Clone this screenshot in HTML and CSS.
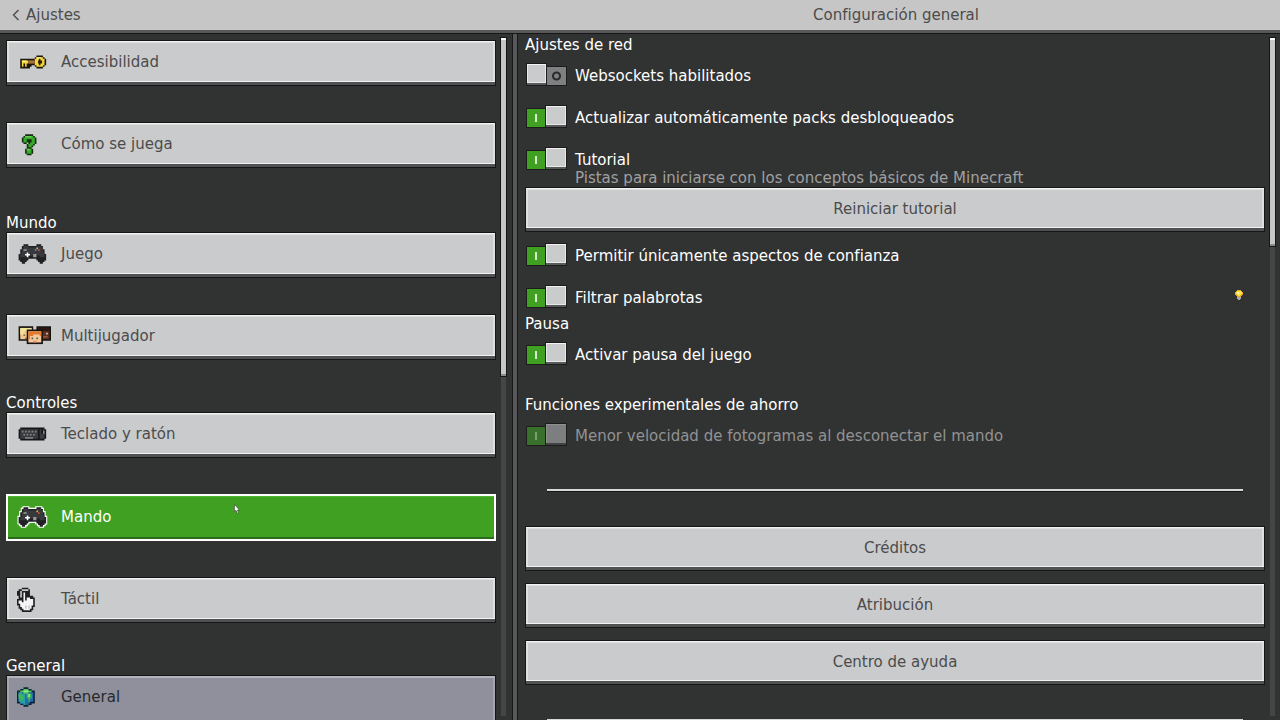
FILE: index.html
```
<!DOCTYPE html>
<html lang="es">
<head>
  <meta charset="UTF-8" />
  <meta name="viewport" content="width=device-width, initial-scale=1" />
  <title>Ajustes</title>
  <link rel="stylesheet" href="styles.css">
</head>
<body>

<header>
  <a class="back" href="#">
    <svg width="8" height="12" viewBox="0 0 8 12"><path d="M6.500 1L1.500 6l5 5" fill="none" stroke="#4c4c4c" stroke-width="1.4"/></svg>
    Ajustes
  </a>
  <h1>Configuración general</h1>
</header>

<main>
  <div class="sidebar">
    <nav>
      <button class="item">
        <svg class="icon" viewBox="0 0 21 16">
          <path fill="#1c1508" d="M12 4h4v1h1v1h1v4h-1v1h-1v1h-4v-1h-1v-1H9v1H8v1H2V6h9V5h1z"/>
          <path fill="#f3d63b" d="M12 5h4v1h1v4h-1v1h-4v-1h-1V6h1zM3 7h4v2H6v2H5V9H4v2H3z"/>
          <path fill="#a9743b" d="M7 7h4v2H7z"/>
          <path fill="#fff27a" d="M12 5h3v1h-3zM3 7h3v1H3z"/>
          <path fill="#2c2108" d="M13 7h.500V6h1v1h1v2h-1v1h-1V9H13z"/>
        </svg>
        Accesibilidad
      </button>
      <button class="item">
        <svg class="icon" viewBox="0 0 21 16">
          <path fill="#12300e" d="M5 2h5v1h1v1h1v4h-1v1h-1v1H9v1h1v3H9v1H6v-1H5v-3h1V8h1V7H6v1H4V7H3V4h1V3h1z"/>
          <path fill="#36a82c" d="M5 3h5v1h1v4h-1v1H9v1H7V8h1V7h1V5H6v2H4V4h1zM6 11h3v3H6z"/>
          <path fill="#62cc50" d="M5 3h4v1H5zM6 11h2v1H6z"/>
        </svg>
        Cómo se juega
      </button>

      <h2>Mundo</h2>
      <button class="item">
        <svg class="icon" viewBox="0 0 21 16">
          <path fill="#202123" d="M4 2h3v1h5V2h3v1h1v2h1v3h1v4h-1v1h-1v1h-2v-1h-1v-1h-1v-1H7v1H6v1H5v1H3v-1H2v-1H1V8h1V5h1V3h1z"/>
          <path fill="#38393c" d="M4 3h3v1h5V3h3v1h1v3h1v3h-3v-1H5v1H2V8h1V5h1z"/>
          <path fill="#fff" d="M6 7h1v1h1v1H7v1H6V9H5V8h1z"/>
          <path fill="#9a9a9a" d="M4 5h2v1H4zM10 8h2v2h-2z"/>
          <path fill="#d9533a" d="M13 5h1v1h-1z"/><path fill="#4b8fd0" d="M11 5h1v1h-1z"/><path fill="#e2b13b" d="M12 4h1v1h-1z"/>
        </svg>
        Juego
      </button>
      <button class="item">
        <svg class="icon" viewBox="0 0 21 16">
          <path fill="#17130f" d="M1 2h9v9H1zM12 2h9v9h-9z"/>
          <path fill="#edc98f" d="M2 3h7v7H2z"/><path fill="#f3e49a" d="M2 3h7v2H4v2H2z"/>
          <path fill="#9a6238" d="M4 7h1v1H4zM5 9h1v1H5z"/>
          <path fill="#5b3021" d="M13 3h7v7h-7z"/><path fill="#2b1710" d="M13 3h7v2h-7z"/>
          <path fill="#e4d3c8" d="M18 6h1v1h-1z"/><path fill="#97543c" d="M16 8h3v1h-3z"/>
          <path fill="#17130f" d="M6 4h10v9H6z"/>
          <path fill="#f4c79d" d="M7 5h8v7H7z"/><path fill="#e07a32" d="M7 5h8v3h-1V7h-4v1H8v2H7z"/>
          <path fill="#47684a" d="M9 9h1v1H9zM12 9h1v1h-1z"/><path fill="#dc8b78" d="M10 11h2v1h-2z"/>
        </svg>
        Multijugador
      </button>

      <h2>Controles</h2>
      <button class="item">
        <svg class="icon" viewBox="0 0 21 16">
          <path fill="#151618" d="M2 4h15v1h1v6h-1v1H2v-1H1V5h1z"/>
          <path fill="#3b3c40" d="M2 5h11v6H2zM14 5h3v6h-3z"/>
          <path fill="#85868a" d="M3 6h1v1H3zM5 6h1v1H5zM7 6h1v1H7zM9 6h1v1H9zM11 6h1v1h-1zM4 8h1v1H4zM6 8h1v1H6zM8 8h1v1H8zM10 8h1v1h-1zM5 10h5v1H5zM16 6h1v2h-1z"/>
          <path fill="#151618" d="M15 5h1v3h-1z"/>
        </svg>
        Teclado y ratón
      </button>
      <button class="item hovered">
        <svg class="icon" viewBox="0 0 21 16">
          <path fill="#202123" stroke="#fff" stroke-width="1.4" paint-order="stroke" d="M4 2h3v1h5V2h3v1h1v2h1v3h1v4h-1v1h-1v1h-2v-1h-1v-1h-1v-1H7v1H6v1H5v1H3v-1H2v-1H1V8h1V5h1V3h1z"/>
          <path fill="#38393c" d="M4 3h3v1h5V3h3v1h1v3h1v3h-3v-1H5v1H2V8h1V5h1z"/>
          <path fill="#fff" d="M6 7h1v1h1v1H7v1H6V9H5V8h1z"/>
          <path fill="#9a9a9a" d="M4 5h2v1H4zM10 8h2v2h-2z"/>
          <path fill="#d9533a" d="M13 5h1v1h-1z"/><path fill="#e2b13b" d="M12 4h1v1h-1z"/>
        </svg>
        Mando
        <svg class="cursor" width="6" height="10" viewBox="0 0 6 10"><path d="M.5 .5v7l1.5-1.200 1.200 3 1.200-.5-1-2.800h2z" fill="#fff" stroke="#333" stroke-width=".5"/></svg>
      </button>
      <button class="item">
        <svg class="icon" viewBox="0 0 21 16">
          <path fill="#202022" d="M3 1h4v1h1v4h2v1h1v6h-1v2H9v1H3v-1H2v-1H1v-2H0V8h1V6H0V3h1V2h2z"/>
          <path fill="#f4f4f6" d="M4 4h1v5h1V7h2v1h2v4H9v2H8v1H4v-1H3v-1H2v-2H1V9h2v1h1z"/>
          <path fill="#c9cacc" d="M2 3h1V2h4v1H3v4H2zM5 12h1v2H5zM7 12h1v2H7z"/>
        </svg>
        Táctil
      </button>

      <h2>General</h2>
      <button class="item selected">
        <svg class="icon" viewBox="0 0 21 16">
          <path fill="#0d2636" d="M4 2h3v1h2v1h2v8H9v1H7v1H4v-1H2v-1H0V4h2V3h2z"/>
          <path fill="#226cae" d="M1 5h9v6H8v1H7v1H4v-1H2v-1H1z"/>
          <path fill="#4fc95c" d="M4 3h3v1h2v1H7v1H4V5H2V4h2z"/>
          <path fill="#2b9fa6" d="M1 5h2v1h2v7H4v-1H2v-1H1z"/>
          <path fill="#3fb754" d="M1 6h2v1h1v3H2V9H1zM6 6h3v3H8v2H7V9H6z"/>
          <path fill="#91eb76" d="M4 4h3v1H4zM7 6h1v2H7z"/>
        </svg>
        General
      </button>
    </nav>
    <div class="scrollbar"><div class="thumb half"></div></div>
  </div>

  <div class="panel">
    <div class="content">
      <section>
        <h2>Ajustes de red</h2>
        <div class="row">
          <input type="checkbox" id="websockets">
          <label for="websockets">Websockets habilitados</label>
        </div>
        <div class="row">
          <input type="checkbox" id="packs" checked>
          <label for="packs">Actualizar automáticamente packs desbloqueados</label>
        </div>
        <div class="row described">
          <input type="checkbox" id="tutorial" checked>
          <div>
            <label for="tutorial">Tutorial</label>
            <p>Pistas para iniciarse con los conceptos básicos de Minecraft</p>
          </div>
        </div>
        <button class="wide reset">Reiniciar tutorial</button>
        <div class="row">
          <input type="checkbox" id="skins" checked>
          <label for="skins">Permitir únicamente aspectos de confianza</label>
        </div>
        <div class="row">
          <input type="checkbox" id="filter" checked>
          <label for="filter">Filtrar palabrotas</label>
          <svg class="bulb" width="8" height="12" viewBox="0 0 8 12">
            <path fill="#e9a51c" d="M2 1h4v1h1v1h1v3H7v1H6v1H2V7H1V6H0V3h1V2h1z"/>
            <path fill="#ffe14a" d="M2 2h4v1h1v2H6v1H5v1H3V6H2V5H1V3h1z"/>
            <path fill="#fff8c0" d="M2 3h2v2H2z"/>
            <path fill="#a9a9a9" d="M2 8h4v2H5v1H3v-1H2z"/>
          </svg>
        </div>
      </section>

      <section>
        <h2>Pausa</h2>
        <div class="row">
          <input type="checkbox" id="pause" checked>
          <label for="pause">Activar pausa del juego</label>
        </div>
      </section>

      <section class="spaced">
        <h2>Funciones experimentales de ahorro</h2>
        <div class="row">
          <input type="checkbox" id="framerate" checked disabled>
          <label for="framerate">Menor velocidad de fotogramas al desconectar el mando</label>
        </div>
      </section>

      <hr>
      <div class="links">
        <button class="wide">Créditos</button>
        <button class="wide">Atribución</button>
        <button class="wide">Centro de ayuda</button>
      </div>
      <hr>
    </div>
    <div class="scrollbar"><div class="thumb third"></div></div>
  </div>
</main>

</body>
</html>
```
FILE: styles.css
```
* {
  box-sizing: border-box;
}
body {
  margin: 0;
  height: 100vh;
  overflow: hidden;
  display: flex;
  flex-direction: column;
  background-color: #313232;
  color: #fff;
  font-family: "DejaVu Sans", sans-serif;
  font-size: 15px;
  line-height: 18px;
}
h1, h2, p {
  margin: 0;
  font-size: 15px;
  font-weight: normal;
}
button {
  font: inherit;
  cursor: pointer;
}
header, main {
  display: grid;
  grid-template-columns: 2fr 3fr;
}
header {
  flex: none;
  align-items: center;
  height: 33px;
  background-color: #c6c6c6;
  border-bottom: 3px solid #58585a;
  color: #4c4c4c;
}
header h1 {
  text-align: center;
}
.back {
  display: flex;
  align-items: center;
  gap: 6px;
  padding-left: 12px;
  color: #4c4c4c;
  text-decoration: none;
}
main {
  flex: 1;
  min-height: 0;
  border-top: 1px solid #161616;
}
.sidebar, .panel {
  display: flex;
  min-width: 0;
  min-height: 0;
  overflow: hidden;
}
.sidebar {
  padding: 0 5px 0 6px;
}
.panel {
  margin-left: 1px;
  padding-right: 4px;
  border-left: 4px solid #58585a;
  box-shadow: -1px 0 #161616, inset 1px 0 #161616;
}
nav, .content {
  flex: 1;
  min-width: 0;
}

/* sidebar */
nav {
  padding-top: 6px;
}
nav h2 {
  margin-top: 34px;
}
nav h2:first-of-type {
  margin-top: 46px;
}
.item, .wide {
  display: flex;
  align-items: center;
  width: 100%;
  border: 1px solid #161616;
  background-color: #cacbcd;
  color: #4c4c4c;
  box-shadow: inset 0 -3px #505153, inset 0 1px #f2f2f2, inset 0 -4px #f2f2f2, inset 0 2px #dedede, inset 2px 0 #dedfe0, inset -2px 0 #dedfe0;
}
.item {
  position: relative;
  gap: 10px;
  height: 46px;
  padding: 0 10px 2px;
}
.item + .item {
  margin-top: 36px;
}
.icon {
  width: 34px;
  height: 26px;
  overflow: visible;
}
.item.hovered {
  height: 47px;
  border: 2px solid #fff;
  padding-left: 9px;
  background-color: #3fa022;
  color: #fff;
  box-shadow: inset 0 -2px #2b6b1c, inset 0 1px #4eb62f;
}
.item.selected {
  background-color: #8f909b;
  color: #29292d;
  box-shadow: inset 0 2px #b3b4bd, inset 2px 0 #a5a6b0, inset -2px 0 #a5a6b0;
}
.cursor {
  position: absolute;
  left: 226px;
  top: 8px;
}

/* scrollbars */
.scrollbar {
  flex: none;
  width: 7px;
  margin: 3px 0 4px 4px;
  background-color: #444546;
  border: solid #313232;
  border-width: 0 1px;
}
.thumb {
  margin: 0 -1px;
  border: 1px solid #161616;
  background-color: #c6c6c6;
  box-shadow: inset 0 2px #fff, inset 0 -2px #8b8b8b;
}
.half {
  height: 50%;
}
.third {
  height: 31%;
}

/* options */
.content {
  padding: 1px 0 0 8px;
}
.content h2 {
  line-height: 20px;
}
.spaced {
  margin-top: 24px;
}
.row {
  display: flex;
  align-items: flex-start;
  gap: 8px;
  padding: 12px 0 7px;
}
.row + .row {
  margin-top: 5px;
}
.row.described {
  padding-bottom: 0;
}
.row label {
  display: block;
}
.row p {
  color: #a0a0a0;
}
.bulb {
  margin: 0 22px 0 auto;
  shape-rendering: crispEdges;
}
input[type="checkbox"] {
  appearance: none;
  flex: none;
  display: flex;
  align-items: flex-end;
  width: 41px;
  height: 21px;
  margin: -2px 0 -1px 1px;
}
input[type="checkbox"]::before,
input[type="checkbox"]::after {
  content: "";
  border: 1px solid #1c1c1c;
}
/* coloured half with the I / O mark */
input[type="checkbox"]::before {
  order: 2;
  width: 20px;
  height: 18px;
  border-left: 0;
  background: radial-gradient(circle, #7f8081 2px, #2a2a2a 3px, #2a2a2a 4px, #7f8081 5px);
}
input[type="checkbox"]::after {
  order: 1;
  width: 21px;
  height: 21px;
  background-color: #cacbcd;
  box-shadow: inset 0 -2px #58595b, inset 0 1px #f2f2f2, inset 1px 0 #e8e8e8, inset 0 -3px #e8e8e8, inset -1px 0 #e8e8e8;
}
input[type="checkbox"]:checked::before {
  order: 0;
  width: 19px;
  border-left: 1px solid #1c1c1c;
  border-right: 0;
  background: linear-gradient(#d5ecce, #d5ecce) center / 2px 8px no-repeat, #3fa022;
}
input[type="checkbox"]:disabled::before {
  background: linear-gradient(#7d9c76, #7d9c76) center / 2px 8px no-repeat, #39702b;
}
input[type="checkbox"]:disabled::after {
  background-color: #7d7e7f;
  box-shadow: inset 0 -2px #424344, inset 0 1px #8f8f8f, inset 1px 0 #8f8f8f;
}
input:disabled + label {
  color: #929292;
}
.wide {
  justify-content: center;
  height: 45px;
  padding: 0 4px 2px;
}
.reset {
  margin-bottom: 3px;
}
.links {
  display: grid;
  gap: 12px;
}
hr {
  height: 3px;
  margin: 34px 22px;
  border: 0;
  background-color: #d8d8d8;
  border-bottom: 1px solid #161616;
}
.spaced + hr {
  margin-top: 37px;
}
```
